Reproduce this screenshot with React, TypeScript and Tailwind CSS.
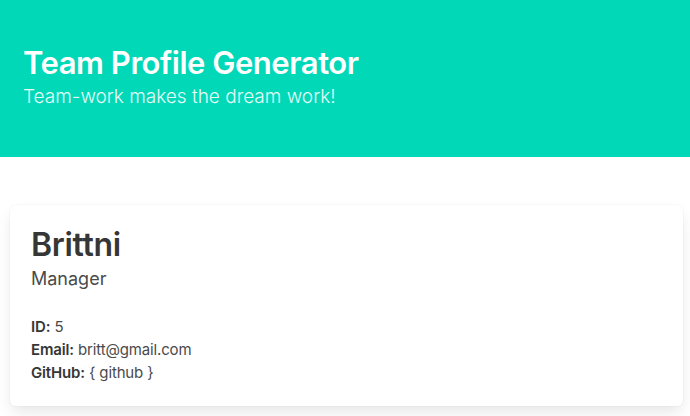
import React from 'react'

const employees = [
    { name: 'Brittni', role: 'Manager', id: 5, email: 'britt@gmail.com', github: '{ github }' },
]

const App = () => {
    return (
        <div className="w-[690px] h-[416px] bg-white overflow-hidden font-['Inter',sans-serif]">
            {/* hero */}
            <section className="bg-[#00d8b7] h-[157px] px-[23px] pt-[45px]">
                <h1 className="text-white text-[31px] leading-[36px] font-semibold tracking-[-0.015em]">Team Profile Generator</h1>
                <h2 className="text-white/90 text-[19px] leading-[25px] font-light mt-[3px]">Team-work makes the dream work!</h2>
            </section>

            <div className="pt-12 pl-[10px]">
                {employees.map((emp) => (
                    <div key={emp.id} className="w-[673px] h-[201px] bg-white rounded-md shadow-[0_8px_16px_-2px_rgba(10,10,10,0.1),0_0_0_1px_rgba(10,10,10,0.02)] px-[21px] pt-[20px]">
                        <p className="text-[#363636] text-[32px] leading-[40px] font-semibold tracking-[-0.01em]">{emp.name}</p>
                        <p className="text-[#4a4a4a] text-[18px] leading-[24px] mt-[2px]">{emp.role}</p>
                        <ul className="mt-[24px] text-[#4a4a4a] text-[15px] leading-[23px] tracking-[-0.01em]">
                            <li><strong className="font-semibold text-[#363636]">ID:</strong> {emp.id}</li>
                            <li><strong className="font-semibold text-[#363636]">Email:</strong> {emp.email}</li>
                            <li><strong className="font-semibold text-[#363636]">GitHub:</strong> {emp.github}</li>
                        </ul>
                    </div>
                ))}
            </div>
        </div>
    )
}

export default App
